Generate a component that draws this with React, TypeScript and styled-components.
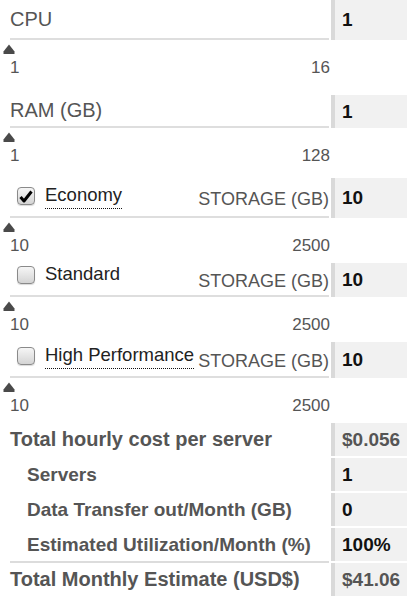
import React from 'react';
import styled, { createGlobalStyle } from 'styled-components';

const GlobalStyle = createGlobalStyle`
    body {
        margin: 0;
        background: #fff;
        font-family: "Liberation Sans", Arial, sans-serif;
    }
`
const Page = styled.div`
    width: 407px;
    overflow: hidden;
`
const Block = styled.div<{ $mb: number }>`
    margin-bottom: ${(p) => p.$mb}px;
`
const InputRow = styled.div<{ $h: number }>`
    display: flex;
    height: ${(p) => p.$h}px;
`
const FieldLabel = styled.div`
    flex: 1;
    margin-left: 10px;
    margin-right: 2px;
    border-bottom: 2px solid #dedede;
    display: flex;
    align-items: center;
    justify-content: space-between;
    font-size: 20px;
    color: #555;
    white-space: nowrap;
`
const ValueBox = styled.div<{ $muted?: boolean; $gap?: boolean }>`
    width: 76px;
    box-sizing: border-box;
    background: #f1f1f1;
    border-left: 4px solid #d9d9d9;
    padding-left: 7px;
    margin-bottom: ${(p) => (p.$gap ? 2 : 0)}px;
    display: flex;
    align-items: center;
    font-size: 19px;
    font-weight: bold;
    color: ${(p) => (p.$muted ? '#555' : '#111')};
`
const SliderArea = styled.div`
    height: 18px;
    box-sizing: border-box;
    padding: 4px 0 0 3px;
    svg { display: block; }
`
const Scale = styled.div`
    width: 320px;
    margin-left: 10px;
    display: flex;
    justify-content: space-between;
    font-size: 17px;
    line-height: 20px;
    color: #555;
`
const CheckGroup = styled.label`
    display: flex;
    align-items: flex-start;
    align-self: flex-end;
    margin: 0 0 7px 7px;
    gap: 10px;
`
const CheckBox = styled.span`
    width: 18px;
    height: 18px;
    margin-top: 3px;
    box-sizing: border-box;
    border: 1px solid #8a8a8a;
    border-radius: 4px;
    background: linear-gradient(#f6f6f6, #d4d4d4);
    box-shadow: 0 1px 1px rgba(0, 0, 0, 0.15);
    display: flex;
    align-items: center;
    justify-content: center;
    svg { display: block; }
`
const CheckText = styled.span<{ $dotted?: boolean }>`
    font-size: 18.5px;
    color: #222;
    padding-bottom: 2px;
    border-bottom: 1px dotted ${(p) => (p.$dotted ? '#111' : 'transparent')};
`
const StorageText = styled.span`
    font-size: 18px;
    color: #555;
    margin-top: 4px;
`
const SumRow = styled.div`
    display: flex;
    height: 35px;
`
const SumLabel = styled.div<{ $sub?: boolean; $divider?: boolean }>`
    flex: 1;
    margin-left: 10px;
    margin-right: 2px;
    padding-left: ${(p) => (p.$sub ? 17 : 0)}px;
    display: flex;
    align-items: center;
    font-weight: bold;
    font-size: ${(p) => (p.$sub ? 19 : 20)}px;
    color: #555;
    border-bottom: 2px solid ${(p) => (p.$divider ? '#dcdcdc' : 'transparent')};
    white-space: nowrap;
`

const Thumb: React.FC = () => (
    <svg width="12" height="10" viewBox="0 0 12 10">
        <path d="M6 0.5 L11.5 7.5 L11.5 10 L0.5 10 L0.5 7.5 Z" fill="#4a4a4a" />
    </svg>
)

const Tick: React.FC = () => (
    <svg width="14" height="13" viewBox="0 0 14 13">
        <path d="M1.5 7 L5 11 L12.5 1.5" fill="none" stroke="#000" strokeWidth="3" strokeLinejoin="round" />
    </svg>
)

type SliderProps = { min: string; max: string };
const Slider: React.FC<SliderProps> = ({ min, max }) => (
    <>
        <SliderArea><Thumb /></SliderArea>
        <Scale><span>{min}</span><span>{max}</span></Scale>
    </>
)

type StorageProps = { name: string; checked?: boolean; dotted?: boolean; h: number; mb: number };
const StorageBlock: React.FC<StorageProps> = ({ name, checked, dotted, h, mb }) => (
    <Block $mb={mb}>
        <InputRow $h={h}>
            <FieldLabel>
                <CheckGroup>
                    <CheckBox>{checked ? <Tick /> : null}</CheckBox>
                    <CheckText $dotted={dotted}>{name}</CheckText>
                </CheckGroup>
                <StorageText>STORAGE (GB)</StorageText>
            </FieldLabel>
            <ValueBox>10</ValueBox>
        </InputRow>
        <Slider min="10" max="2500" />
    </Block>
)

const App: React.FC = () => {
    return (
        <Page>
            <GlobalStyle />
            <Block $mb={17}>
                <InputRow $h={40}>
                    <FieldLabel>CPU</FieldLabel>
                    <ValueBox>1</ValueBox>
                </InputRow>
                <Slider min="1" max="16" />
            </Block>
            <Block $mb={12}>
                <InputRow $h={33}>
                    <FieldLabel>RAM (GB)</FieldLabel>
                    <ValueBox>1</ValueBox>
                </InputRow>
                <Slider min="1" max="128" />
            </Block>
            <StorageBlock name="Economy" checked dotted h={40} mb={7} />
            <StorageBlock name="Standard" h={34} mb={7} />
            <StorageBlock name="High Performance" dotted h={36} mb={7} />

            <SumRow>
                <SumLabel>Total hourly cost per server</SumLabel>
                <ValueBox $muted $gap>$0.056</ValueBox>
            </SumRow>
            <SumRow>
                <SumLabel $sub>Servers</SumLabel>
                <ValueBox $gap>1</ValueBox>
            </SumRow>
            <SumRow>
                <SumLabel $sub>Data Transfer out/Month (GB)</SumLabel>
                <ValueBox $gap>0</ValueBox>
            </SumRow>
            <SumRow>
                <SumLabel $sub $divider>Estimated Utilization/Month (%)</SumLabel>
                <ValueBox $gap>100%</ValueBox>
            </SumRow>
            <SumRow>
                <SumLabel>Total Monthly Estimate (USD$)</SumLabel>
                <ValueBox $muted $gap>$41.06</ValueBox>
            </SumRow>
        </Page>
    )
}

export default App;
